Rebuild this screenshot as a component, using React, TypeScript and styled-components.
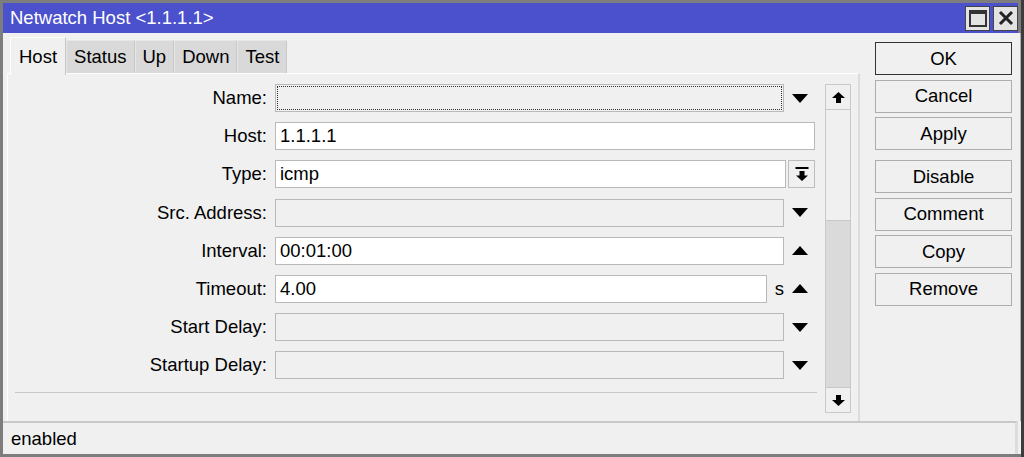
import React from 'react';
import styled, { createGlobalStyle } from 'styled-components';

const GlobalStyle = createGlobalStyle`
  html, body {
    margin: 0;
    padding: 0;
    background: #3c3c3c;
  }
  body {
    font-family: "Liberation Sans", Arial, sans-serif;
    font-size: 18.5px;
    color: #000;
  }
`;

// Window frame
const Window = styled.div`
  width: 1018px;
  height: 451px;
  background: #f0f0f0;
  border: 3px solid #7d7d7d;
  border-right-width: 0;
  display: flex;
  flex-direction: column;
  overflow: hidden;
`;

const TitleBar = styled.div`
  height: 30px;
  flex-shrink: 0;
  background: #4b50cc;
  color: #fff;
  display: flex;
  align-items: center;
  padding: 0 0 0 7px;
  border-right: 3px solid #7d7d7d;
`;

const Title = styled.div`
  flex: 1;
  white-space: nowrap;
`;

const CaptionButton = styled.div`
  width: 23px;
  height: 23px;
  margin-left: 3px;
  background: #e3e3e3;
  border: 1px solid #444;
  display: flex;
  align-items: center;
  justify-content: center;
`;

const Body = styled.div`
  flex: 1;
  display: flex;
  min-height: 0;
  padding-left: 4px;
  border-right: 1px solid #b0b0b0;
`;

const LeftCol = styled.div`
  width: 853px;
  display: flex;
  flex-direction: column;
`;

const TabBar = styled.div`
  height: 40px;
  display: flex;
  align-items: flex-end;
  padding-left: 3px;
`;

const Tab = styled.div<{ $active?: boolean }>`
  box-sizing: border-box;
  height: ${(p) => (p.$active ? '38px' : '33px')};
  padding: 0 ${(p) => (p.$active ? '8px' : '7px')};
  display: flex;
  align-items: center;
  background: ${(p) => (p.$active ? '#f0f0f0' : '#d9d9d9')};
  border-top: 1px solid ${(p) => (p.$active ? '#fdfdfd' : '#e6e6e6')};
  border-left: 1px solid ${(p) => (p.$active ? '#fdfdfd' : '#e6e6e6')};
  border-right: 1px solid ${(p) => (p.$active ? '#c6c6c6' : '#c9c9c9')};
  margin-bottom: ${(p) => (p.$active ? '-2px' : '0')};
  position: relative;
  z-index: ${(p) => (p.$active ? 1 : 0)};
  white-space: nowrap;
`;

const Panel = styled.div`
  flex: 1;
  display: flex;
  border-top: 1px solid #fdfdfd;
  border-left: 1px solid #fdfdfd;
  border-right: 2px solid #dcdcdc;
`;

const Form = styled.div`
  width: 807px;
  padding-top: 10px;
  display: flex;
  flex-direction: column;
`;

const Row = styled.div`
  display: grid;
  grid-template-columns: 259px 540px;
  column-gap: 8px;
  height: 28px;
  align-items: center;
  margin-bottom: 10.2px;
`;

const Label = styled.div`
  text-align: right;
  white-space: nowrap;
`;

const FieldArea = styled.div`
  display: flex;
  align-items: stretch;
  height: 28px;
`;

const Input = styled.div<{ $disabled?: boolean; $focus?: boolean }>`
  flex: 1;
  box-sizing: border-box;
  background: ${(p) => (p.$disabled || p.$focus ? '#f0f0f0' : '#fff')};
  border: 1px solid #b9b9b9;
  padding: 0 4px;
  display: flex;
  align-items: center;
  outline: ${(p) => (p.$focus ? '1px dotted #333' : 'none')};
  outline-offset: -3px;
`;

const ArrowSlot = styled.div`
  width: 31px;
  display: flex;
  align-items: center;
  justify-content: center;
`;

const Unit = styled.div`
  width: 17px;
  display: flex;
  align-items: center;
  justify-content: flex-end;
`;

const DropButton = styled.div`
  width: 27px;
  margin-left: 2px;
  box-sizing: border-box;
  background: #f0f0f0;
  border: 1px solid #bdbdbd;
  display: flex;
  align-items: center;
  justify-content: center;
`;

const Separator = styled.div`
  margin: 2px 0 0 7px;
  height: 1px;
  background: #c8c8c8;
  width: 802px;
`;

const ScrollBar = styled.div`
  width: 26px;
  margin: 10px 0 8px 10px;
  display: flex;
  flex-direction: column;
`;

const ScrollButton = styled.div`
  height: 26px;
  box-sizing: border-box;
  background: #f0f0f0;
  border: 1px solid #c9c9c9;
  display: flex;
  align-items: center;
  justify-content: center;
`;

const Thumb = styled.div`
  height: 111px;
  box-sizing: border-box;
  background: #f0f0f0;
  border: 1px solid #c9c9c9;
  border-top: none;
`;

const Track = styled.div`
  flex: 1;
  background: #dadada;
  border-left: 1px solid #c9c9c9;
  border-right: 1px solid #c9c9c9;
`;

const RightCol = styled.div`
  margin-left: 15px;
  padding-top: 9px;
  width: 137px;
  display: flex;
  flex-direction: column;
`;

const Button = styled.div<{ $default?: boolean; $gapAfter?: boolean }>`
  height: 33px;
  box-sizing: border-box;
  border: 1px solid ${(p) => (p.$default ? '#333' : '#adadad')};
  background: #f0f0f0;
  display: flex;
  align-items: center;
  justify-content: center;
  margin-bottom: ${(p) => (p.$gapAfter ? '10px' : '4.6px')};
`;

const StatusBar = styled.div`
  height: 33px;
  flex-shrink: 0;
  box-sizing: border-box;
  border-top: 2px solid #c8c8c8;
  border-right: 3px solid #dcdcdc;
  margin-right: 3px;
  display: flex;
  align-items: center;
  padding-left: 8px;
`;

// Icons
const DownTri = () => (
  <svg width="16" height="9" viewBox="0 0 16 9">
    <polygon points="0,0 16,0 8,9" fill="#000" />
  </svg>
);

const UpTri = () => (
  <svg width="16" height="9" viewBox="0 0 16 9">
    <polygon points="0,9 16,9 8,0" fill="#000" />
  </svg>
);

const ArrowUp = () => (
  <svg width="13" height="11" viewBox="0 0 13 11">
    <path d="M6.5 0 L13 6 H9 V11 H4 V6 H0 Z" fill="#000" />
  </svg>
);

const ArrowDown = () => (
  <svg width="13" height="11" viewBox="0 0 13 11">
    <path d="M6.5 11 L13 5 H9 V0 H4 V5 H0 Z" fill="#000" />
  </svg>
);

const BarArrowDown = () => (
  <svg width="14" height="14" viewBox="0 0 14 14">
    <rect x="0.5" y="0" width="13" height="2" fill="#000" />
    <path d="M7 14 L13 8.5 H9.5 V4 H4.5 V8.5 H1 Z" fill="#000" />
  </svg>
);

const MaxIcon = () => (
  <svg width="18" height="17" viewBox="0 0 18 17">
    <rect x="1" y="1" width="16" height="15" fill="none" stroke="#333" strokeWidth="2" />
    <rect x="1" y="1" width="16" height="3" fill="#333" />
  </svg>
);

const CloseIcon = () => (
  <svg width="16" height="16" viewBox="0 0 16 16">
    <path d="M2 2 L14 14 M14 2 L2 14" stroke="#222" strokeWidth="3" />
  </svg>
);

const App: React.FC = () => {
  return (
    <>
      <GlobalStyle />
      <Window>
        <TitleBar>
          <Title>Netwatch Host &lt;1.1.1.1&gt;</Title>
          <CaptionButton><MaxIcon /></CaptionButton>
          <CaptionButton><CloseIcon /></CaptionButton>
        </TitleBar>
        <Body>
          <LeftCol>
            <TabBar>
              <Tab $active>Host</Tab>
              <Tab>Status</Tab>
              <Tab>Up</Tab>
              <Tab>Down</Tab>
              <Tab>Test</Tab>
            </TabBar>
            <Panel>
              <Form>
                <Row>
                  <Label>Name:</Label>
                  <FieldArea>
                    <Input $focus />
                    <ArrowSlot><DownTri /></ArrowSlot>
                  </FieldArea>
                </Row>
                <Row>
                  <Label>Host:</Label>
                  <FieldArea>
                    <Input>1.1.1.1</Input>
                  </FieldArea>
                </Row>
                <Row>
                  <Label>Type:</Label>
                  <FieldArea>
                    <Input>icmp</Input>
                    <DropButton><BarArrowDown /></DropButton>
                  </FieldArea>
                </Row>
                <Row>
                  <Label>Src. Address:</Label>
                  <FieldArea>
                    <Input $disabled />
                    <ArrowSlot><DownTri /></ArrowSlot>
                  </FieldArea>
                </Row>
                <Row>
                  <Label>Interval:</Label>
                  <FieldArea>
                    <Input>00:01:00</Input>
                    <ArrowSlot><UpTri /></ArrowSlot>
                  </FieldArea>
                </Row>
                <Row>
                  <Label>Timeout:</Label>
                  <FieldArea>
                    <Input>4.00</Input>
                    <Unit>s</Unit>
                    <ArrowSlot><UpTri /></ArrowSlot>
                  </FieldArea>
                </Row>
                <Row>
                  <Label>Start Delay:</Label>
                  <FieldArea>
                    <Input $disabled />
                    <ArrowSlot><DownTri /></ArrowSlot>
                  </FieldArea>
                </Row>
                <Row>
                  <Label>Startup Delay:</Label>
                  <FieldArea>
                    <Input $disabled />
                    <ArrowSlot><DownTri /></ArrowSlot>
                  </FieldArea>
                </Row>
                <Separator />
              </Form>
              <ScrollBar>
                <ScrollButton><ArrowUp /></ScrollButton>
                <Thumb />
                <Track />
                <ScrollButton><ArrowDown /></ScrollButton>
              </ScrollBar>
            </Panel>
          </LeftCol>
          <RightCol>
            <Button $default>OK</Button>
            <Button>Cancel</Button>
            <Button $gapAfter>Apply</Button>
            <Button>Disable</Button>
            <Button>Comment</Button>
            <Button>Copy</Button>
            <Button>Remove</Button>
          </RightCol>
        </Body>
        <StatusBar>enabled</StatusBar>
      </Window>
    </>
  );
};

export default App;
